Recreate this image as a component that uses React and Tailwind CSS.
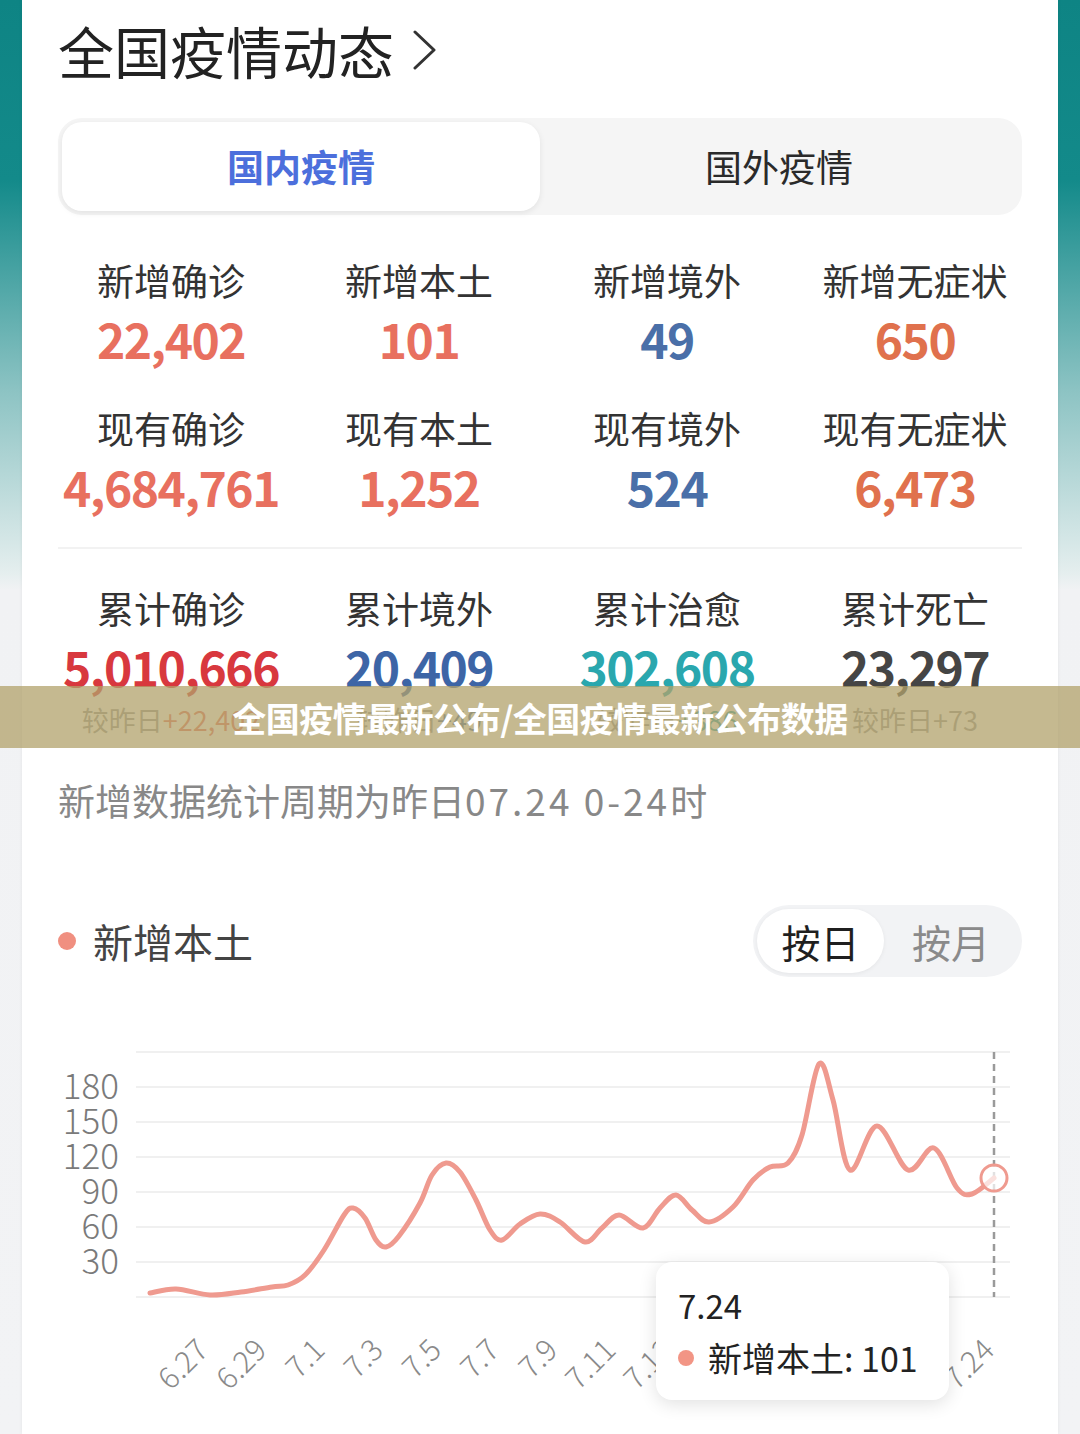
import React from "react";

const rows = [
  [
    { label: "新增确诊", value: "22,402", color: "text-[#e8705f]" },
    { label: "新增本土", value: "101", color: "text-[#e8705f]" },
    { label: "新增境外", value: "49", color: "text-[#4a6fa8]" },
    { label: "新增无症状", value: "650", color: "text-[#e0714d]" },
  ],
  [
    { label: "现有确诊", value: "4,684,761", color: "text-[#e8705f]" },
    { label: "现有本土", value: "1,252", color: "text-[#e8705f]" },
    { label: "现有境外", value: "524", color: "text-[#4a6fa8]" },
    { label: "现有无症状", value: "6,473", color: "text-[#e0714d]" },
  ],
];

const totals = [
  { label: "累计确诊", value: "5,010,666", color: "text-[#d8383e]", diff: "+22,402", diffColor: "text-[#e8705f]" },
  { label: "累计境外", value: "20,409", color: "text-[#3d65a6]", diff: "+49", diffColor: "text-[#4a6fa8]" },
  { label: "累计治愈", value: "302,608", color: "text-[#2aa7ae]", diff: "+386", diffColor: "text-[#2aa7ae]" },
  { label: "累计死亡", value: "23,297", color: "text-[#454545]", diff: "+73", diffColor: "text-[#999999]" },
];

// curve traced from the chart, page coordinates
const curve = [
  [150, 1293], [176, 1289], [210, 1295], [241, 1292], [272, 1287], [288, 1285],
  [305, 1275], [324, 1250], [344, 1215], [353, 1208], [365, 1218], [376, 1240],
  [386, 1247], [399, 1236], [420, 1203], [432, 1175], [446, 1163], [460, 1172],
  [476, 1200], [490, 1230], [502, 1240], [520, 1224], [540, 1214], [560, 1222],
  [585, 1242], [602, 1228], [619, 1215], [643, 1228], [660, 1208], [676, 1195],
  [692, 1210], [709, 1222], [733, 1207], [753, 1180], [770, 1167], [788, 1163],
  [802, 1135], [819, 1064], [833, 1100], [850, 1170], [877, 1126], [908, 1170],
  [934, 1148], [957, 1188], [972, 1194], [994, 1178],
];

const smooth = (pts) => {
  let d = `M${pts[0][0]},${pts[0][1]}`;
  for (let i = 0; i < pts.length - 1; i++) {
    const p0 = pts[i - 1] || pts[i];
    const p1 = pts[i];
    const p2 = pts[i + 1];
    const p3 = pts[i + 2] || p2;
    const c1x = p1[0] + (p2[0] - p0[0]) / 6;
    const c1y = p1[1] + (p2[1] - p0[1]) / 6;
    const c2x = p2[0] - (p3[0] - p1[0]) / 6;
    const c2y = p2[1] - (p3[1] - p1[1]) / 6;
    d += ` C${c1x},${c1y} ${c2x},${c2y} ${p2[0]},${p2[1]}`;
  }
  return d;
};

const gridY = [1052, 1087, 1122, 1157, 1192, 1227, 1262, 1297];
const yLabels = [
  ["180", 1087], ["150", 1122], ["120", 1157], ["90", 1192], ["60", 1227], ["30", 1262],
];
const xLabels = ["6.27", "6.29", "7.1", "7.3", "7.5", "7.7", "7.9", "7.11", "7.13", "7.15", "7.17", "7.19", "7.21"];

const Stat = ({ label, value, color }) => (
  <div className="flex flex-col items-center">
    <div className="text-[37px] leading-[50px] text-[#333333]">{label}</div>
    <div className={`text-[48px] leading-[66px] font-semibold tracking-[-1.5px] ${color}`}>{value}</div>
  </div>
);

const App = () => (
  <div className="relative w-[1080px] h-[1434px] overflow-hidden font-['Noto_Sans_CJK_SC',sans-serif] bg-[linear-gradient(180deg,#0e8484_0px,#138a8a_180px,#8cc3c3_390px,#e4eeee_572px,#f1f2f4_590px,#f2f3f5_100%)]">
    <div className="mx-[22px] h-full bg-white px-9 pt-[22px] overflow-hidden shadow-[0_0_4px_rgba(0,0,0,0.06)]">
      {/* Title */}
      <div className="flex items-center gap-[19px] h-[56px]">
        <h1 className="text-[56px] leading-[56px] text-[#222222]">全国疫情动态</h1>
        <svg width="24" height="40" viewBox="0 0 24 40" fill="none">
          <polyline points="2,2 21,20 2,38" stroke="#333333" strokeWidth="3" strokeLinecap="round" strokeLinejoin="round" />
        </svg>
      </div>

      {/* Tabs */}
      <div className="mt-[40px] h-[97px] grid grid-cols-2 p-1 rounded-[24px] bg-[#f5f5f5]">
        <div className="flex items-center justify-center rounded-[20px] bg-white shadow-[0_2px_6px_rgba(0,0,0,0.08)] text-[37px] font-bold text-[#4c6fdc]">
          国内疫情
        </div>
        <div className="flex items-center justify-center text-[37px] text-[#2a2a2a]">国外疫情</div>
      </div>

      {/* Stats */}
      <div className="w-[992px] -ml-[11px] mt-[40px] flex flex-col gap-[32px]">
        {rows.map((row, i) => (
          <div key={i} className="grid grid-cols-4">
            {row.map((s) => (
              <Stat key={s.label} {...s} />
            ))}
          </div>
        ))}
      </div>

      <div className="mt-[28px] h-[2px] bg-[#f2f2f2]" />

      <div className="w-[992px] -ml-[11px] mt-[34px] grid grid-cols-4">
        {totals.map((s) => (
          <div key={s.label} className="flex flex-col items-center">
            <div className="text-[37px] leading-[50px] text-[#333333]">{s.label}</div>
            <div className={`text-[48px] leading-[66px] font-semibold tracking-[-1.5px] ${s.color}`}>{s.value}</div>
            <div className="mt-[1px] text-[27px] leading-[40px] text-[#999999] whitespace-nowrap">
              较昨日<span className={s.diffColor}>{s.diff}</span>
            </div>
          </div>
        ))}
      </div>

      <p className="mt-[38px] text-[37px] leading-[44px] text-[#888888] whitespace-nowrap">
        新增数据统计周期为昨日<span className="tracking-[3px]">07.24 0-24</span>时
      </p>

      {/* Legend + toggle */}
      <div className="mt-[83px] h-[72px] flex items-center justify-between">
        <div className="flex items-center gap-[17px]">
          <span className="w-[18px] h-[18px] rounded-full bg-[#f08f80]" />
          <span className="text-[40px] leading-[50px] text-[#444444]">新增本土</span>
        </div>
        <div className="flex w-[269px] h-[72px] p-1 rounded-full bg-[#f2f3f5]">
          <div className="w-[127px] h-full flex items-center justify-center rounded-full bg-white shadow-[0_1px_4px_rgba(0,0,0,0.06)] text-[39px] text-[#1f1f1f]">
            按日
          </div>
          <div className="flex-1 flex items-center justify-center text-[39px] text-[#8a8a8a]">按月</div>
        </div>
      </div>

      {/* Chart */}
      <div className="relative -mx-9 mt-[23px] h-[434px]">
        <svg width="1036" height="434" viewBox="22 1000 1036 434" className="block">
          {gridY.map((y) => (
            <line key={y} x1="136" x2="1010" y1={y} y2={y} stroke="#f0f0f0" strokeWidth="2" />
          ))}
          {yLabels.map(([t, y]) => (
            <text
              key={t}
              x="119"
              y={y + 12}
              textAnchor="end"
              fontSize="35"
              fill="#7a7a7a"
              fontFamily="'Noto Sans CJK SC', sans-serif"
              fontWeight="300"
            >
              {t}
            </text>
          ))}
          {xLabels.map((t, i) => {
            const x = 150 + 29.1 * (2 + i * 2) + 2;
            return (
              <text
                key={t}
                x={x}
                y="1352"
                textAnchor="end"
                fontSize="30"
                fill="#8a8a8a"
                fontFamily="'Noto Sans CJK SC', sans-serif"
                fontWeight="300"
                transform={`rotate(-45 ${x} 1352)`}
              >
                {t}
              </text>
            );
          })}
          <text
            x="996"
            y="1352"
            textAnchor="end"
            fontSize="30"
            fill="#8a8a8a"
            fontFamily="'Noto Sans CJK SC', sans-serif"
            fontWeight="300"
            transform="rotate(-45 996 1352)"
          >
            7.24
          </text>
          <line x1="994" x2="994" y1="1052" y2="1297" stroke="#9a9a9a" strokeWidth="2.5" strokeDasharray="7 5" />
          <path d={smooth(curve)} fill="none" stroke="#ef9a8f" strokeWidth="5" strokeLinecap="round" strokeLinejoin="round" />
          <circle cx="994" cy="1178" r="13" fill="#ffffff" fillOpacity="0.7" stroke="#ef9a8f" strokeWidth="3" />
        </svg>

        {/* Tooltip */}
        <div className="absolute left-[634px] top-[262px] w-[293px] h-[138px] rounded-[16px] bg-white shadow-[0_4px_18px_rgba(0,0,0,0.12)] px-[22px] pt-[20px]">
          <div className="text-[33px] leading-[46px] text-[#222222]">7.24</div>
          <div className="mt-[7px] flex items-center gap-[14px] h-[46px]">
            <span className="w-4 h-4 rounded-full bg-[#f29585]" />
            <span className="text-[34px] leading-[46px] text-[#222222] whitespace-nowrap">新增本土: 101</span>
          </div>
        </div>
      </div>
    </div>

    {/* Caption banner over the screenshot */}
    <div className="absolute left-0 top-[686px] w-full h-[62px] flex items-center justify-center bg-[#b2a26b]/75">
      <span className="text-[34px] font-bold text-white tracking-[-0.5px]">全国疫情最新公布/全国疫情最新公布数据</span>
    </div>
  </div>
);

export default App;
